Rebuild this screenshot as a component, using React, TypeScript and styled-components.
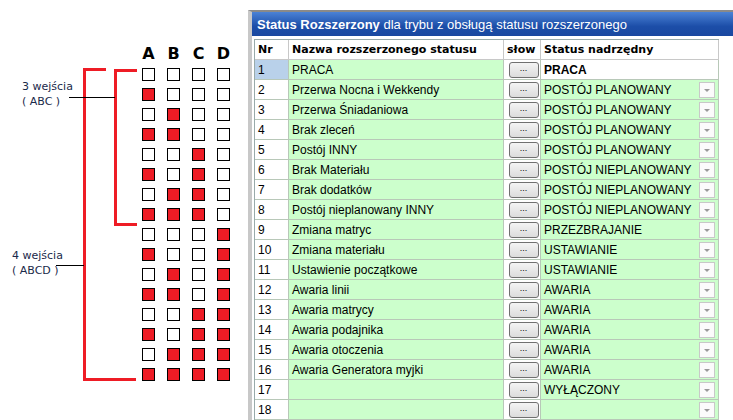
import React from "react";
import styled, { createGlobalStyle } from "styled-components";

const G = createGlobalStyle`
  html,body{margin:0;padding:0;background:#fff;width:733px;height:420px;overflow:hidden;font-family:"Liberation Sans",Arial,sans-serif;}
`;
const Page = styled.div`display:flex;width:733px;height:420px;`;
const Diagram = styled.div`position:relative;width:248px;height:420px;flex:none;`;
const Heads = styled.div`position:absolute;left:141px;top:44px;display:grid;grid-template-columns:repeat(4,25px);
  font:bold 16px "DejaVu Sans",Verdana,sans-serif;`;
const Head = styled.div`width:15px;text-align:center;`;
const Squares = styled.div`position:absolute;left:142px;top:68px;display:grid;grid-template-columns:repeat(4,25px);row-gap:7px;`;
const Sq = styled.div<{ $on: boolean }>`width:11px;height:11px;border:1px solid #000;background:${p => p.$on ? "#ee1c25" : "#fff"};`;
const RedV = styled.div<{ $x: number; $t: number; $h: number }>`position:absolute;left:${p => p.$x}px;top:${p => p.$t}px;width:3px;height:${p => p.$h}px;background:#ee1c25;`;
const RedH = styled.div<{ $x: number; $t: number; $w: number }>`position:absolute;left:${p => p.$x}px;top:${p => p.$t}px;height:3px;width:${p => p.$w}px;background:#ee1c25;`;
const Line = styled.div<{ $x: number; $t: number; $w: number }>`position:absolute;left:${p => p.$x}px;top:${p => p.$t}px;height:1px;width:${p => p.$w}px;background:#000;`;
const Label = styled.div<{ $x: number; $t: number }>`position:absolute;left:${p => p.$x}px;top:${p => p.$t}px;font:11px "DejaVu Sans",Verdana,sans-serif;color:#1a2a4a;line-height:15px;`;

const Win = styled.div`flex:1;border-left:4px solid #c8c8c8;margin-top:10px;display:flex;flex-direction:column;border-top:2px solid #8a8a8a;`;
const Title = styled.div`height:28px;background:linear-gradient(#4b82d6,#1c4ea8 60%,#1a48a0);color:#fff;font-size:13px;display:flex;align-items:center;padding-left:5px;b{font-weight:bold;}`;
const Table = styled.div`margin:3px 0 0 2px;width:464px;border-left:1px solid #9aa;border-top:1px solid #9aa;`;
const Row = styled.div`display:grid;grid-template-columns:34px 215px 37px 178px;height:20px;`;
const Cell = styled.div<{ $bg?: string; $bold?: boolean }>`background:${p => p.$bg || "#ccffcc"};border-right:1px solid #b8c8b8;border-bottom:1px solid #b8c8b8;
  font-size:12px;font-weight:${p => p.$bold ? "bold" : "normal"};display:flex;align-items:center;padding-left:3px;overflow:hidden;white-space:nowrap;position:relative;color:#000;`;
const HCell = styled(Cell)`background:#fff;font:bold 11px "DejaVu Sans",Verdana,sans-serif;border-color:#c8c8c8;`;
const Btn = styled.div`margin:1px auto 0;width:28px;height:14px;border:1px solid #707070;border-radius:3px;background:linear-gradient(#f4f4f4,#dcdcdc);font-size:9px;text-align:center;line-height:10px;`;
const Drop = styled.div`position:absolute;right:3px;top:2px;width:14px;height:14px;border:1px solid #c8c8c8;background:#fbfbfb;
  &:after{content:"";position:absolute;left:4px;top:6px;border-left:3px solid transparent;border-right:3px solid transparent;border-top:3px solid #999;}`;

const rows: [string, string][] = [
  ["PRACA", "PRACA"], ["Przerwa Nocna i Wekkendy", "POSTÓJ PLANOWANY"], ["Przerwa Śniadaniowa", "POSTÓJ PLANOWANY"],
  ["Brak zleceń", "POSTÓJ PLANOWANY"], ["Postój INNY", "POSTÓJ PLANOWANY"], ["Brak Materiału", "POSTÓJ NIEPLANOWANY"],
  ["Brak dodatków", "POSTÓJ NIEPLANOWANY"], ["Postój nieplanowany INNY", "POSTÓJ NIEPLANOWANY"], ["Zmiana matryc", "PRZEZBRAJANIE"],
  ["Zmiana materiału", "USTAWIANIE"], ["Ustawienie początkowe", "USTAWIANIE"], ["Awaria linii", "AWARIA"],
  ["Awaria matrycy", "AWARIA"], ["Awaria podajnika", "AWARIA"], ["Awaria otoczenia", "AWARIA"],
  ["Awaria Generatora myjki", "AWARIA"], ["", "WYŁĄCZONY"], ["", ""],
];

export default function App() {
  const sq = [];
  for (let r = 0; r < 16; r++) for (let c = 0; c < 4; c++) sq.push(<Sq key={r * 4 + c} $on={c < 3 ? ((r >> c) & 1) === 1 : r >= 8} />);
  return (
    <Page>
      <G />
      <Diagram>
        <Heads>{["A", "B", "C", "D"].map(h => <Head key={h}>{h}</Head>)}</Heads>
        <Squares>{sq}</Squares>
        <RedV $x={83} $t={68} $h={313} />
        <RedH $x={83} $t={68} $w={23} />
        <RedH $x={83} $t={378} $w={53} />
        <RedV $x={114} $t={69} $h={156} />
        <RedH $x={114} $t={69} $w={23} />
        <RedH $x={114} $t={223} $w={23} />
        <Line $x={69} $t={97} $w={46} />
        <Line $x={56} $t={265} $w={28} />
        <Label $x={22} $t={79}>3 wejścia<br />( ABC )</Label>
        <Label $x={12} $t={248}>4 wejścia<br />( ABCD )</Label>
      </Diagram>
      <Win>
        <Title><b>Status Rozszerzony</b>&nbsp;dla trybu z obsługą statusu rozszerzonego</Title>
        <Table>
          <Row><HCell>Nr</HCell><HCell>Nazwa rozszerzonego statusu</HCell><HCell>słow</HCell><HCell>Status nadrzędny</HCell></Row>
          {rows.map(([n, s], i) => (
            <Row key={i}>
              <Cell $bg={i === 0 ? "#b9d1ea" : "#fff"}>{i + 1}</Cell>
              <Cell>{n}</Cell>
              <Cell $bg="#fff"><Btn>...</Btn></Cell>
              <Cell $bg={i === 0 ? "#fff" : undefined} $bold={i === 0}>{s}{i > 0 && <Drop />}</Cell>
            </Row>
          ))}
        </Table>
      </Win>
    </Page>
  );
}
